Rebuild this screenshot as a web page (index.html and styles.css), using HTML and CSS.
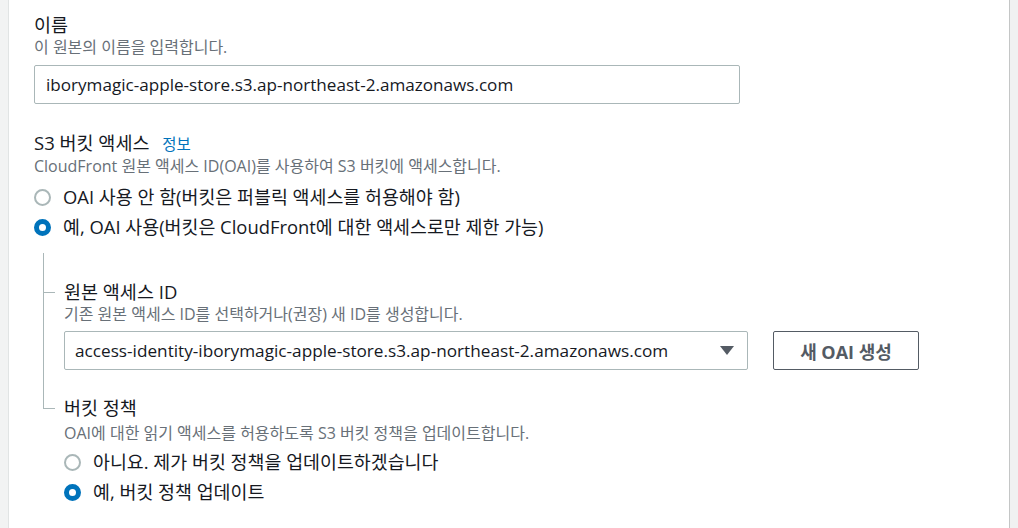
FILE: index.html
```html
<!DOCTYPE html>
<html lang="ko">
<head>
<meta charset="utf-8">
<title>원본 설정</title>
<link rel="stylesheet" href="styles.css">
</head>
<body>
<div class="page">
  <div class="gutter-left"></div>
  <main class="content">
    <section class="field field-name">
      <div class="label">이름</div>
      <div class="desc">이 원본의 이름을 입력합니다.</div>
      <div class="input">iborymagic-apple-store.s3.ap-northeast-2.amazonaws.com</div>
    </section>

    <section class="field field-access">
      <div class="label">S3 버킷 액세스 <a class="info" href="#">정보</a></div>
      <div class="desc">CloudFront 원본 액세스 ID(OAI)를 사용하여 S3 버킷에 액세스합니다.</div>
      <div class="radios">
        <div class="radio-row"><span class="radio"></span><span class="radio-text">OAI 사용 안 함(버킷은 퍼블릭 액세스를 허용해야 함)</span></div>
        <div class="radio-row"><span class="radio checked"></span><span class="radio-text">예, OAI 사용(버킷은 CloudFront에 대한 액세스로만 제한 가능)</span></div>
      </div>
    </section>

    <section class="tree">
      <div class="tree-item">
        <div class="label branch">원본 액세스 ID</div>
        <div class="desc">기존 원본 액세스 ID를 선택하거나(권장) 새 ID를 생성합니다.</div>
        <div class="select-row">
          <div class="select">
            <span class="select-text">access-identity-iborymagic-apple-store.s3.ap-northeast-2.amazonaws.com</span>
            <svg class="caret" width="14" height="9" viewBox="0 0 14 9"><path d="M0 0 H14 L7 9 Z" fill="#545b64"/></svg>
          </div>
          <button class="btn" type="button">새 OAI 생성</button>
        </div>
      </div>
      <div class="tree-item last">
        <div class="label branch">버킷 정책</div>
      </div>
    </section>

    <section class="policy">
      <div class="desc">OAI에 대한 읽기 액세스를 허용하도록 S3 버킷 정책을 업데이트합니다.</div>
      <div class="radios">
        <div class="radio-row"><span class="radio"></span><span class="radio-text">아니요. 제가 버킷 정책을 업데이트하겠습니다</span></div>
        <div class="radio-row"><span class="radio checked"></span><span class="radio-text">예, 버킷 정책 업데이트</span></div>
      </div>
    </section>
  </main>
  <div class="gutter-right"></div>
</div>
</body>
</html>
```

FILE: styles.css
```css
* { box-sizing: border-box; }
html, body { margin: 0; padding: 0; }
body {
  font-family: "Open Sans", "Noto Sans CJK KR", sans-serif;
  color: #16191f;
  background: #ffffff;
}
.page {
  display: flex;
  width: 1018px;
  height: 528px;
  overflow: hidden;
}
.gutter-left {
  width: 9px;
  flex: none;
  background: #f2f3f3;
  border-right: 1px solid #e1e4e4;
}
.gutter-right {
  width: 9px;
  flex: none;
  background: #f0f1f1;
  border-left: 1px solid #c4c6c6;
}
.content {
  flex: 1;
  background: #ffffff;
  padding: 13px 0 0 25px;
  display: flex;
  flex-direction: column;
}
.label {
  font-size: 18.5px;
  line-height: 24px;
  color: #16191f;
}
.desc {
  font-size: 16px;
  line-height: 20px;
  color: #687078;
}
.info {
  color: #0073bb;
  text-decoration: none;
  font-size: 15.5px;
  margin-left: 8px;
}
.input {
  margin-top: 8px;
  width: 706px;
  height: 39px;
  border: 1px solid #aab7b8;
  border-radius: 2px;
  padding: 0 11px;
  display: flex;
  align-items: center;
  font-size: 17.1px;
  color: #16191f;
}
.field-access { margin-top: 27px; }
.radios {
  margin-top: 6px;
  display: flex;
  flex-direction: column;
}
.radio-row {
  height: 30px;
  display: flex;
  align-items: center;
  gap: 12px;
}
.radio {
  width: 17px;
  height: 17px;
  flex: none;
  border-radius: 50%;
  border: 2px solid #aab7b8;
  background: #fff;
}
.radio.checked {
  border: 5.5px solid #0073bb;
}
.radio-text {
  font-size: 18.4px;
  line-height: 24px;
  color: #16191f;
}
.tree {
  position: relative;
  margin-top: 11px;
  margin-left: 9px;
  padding-left: 21px;
  padding-top: 27px;
}
.tree::before {
  content: "";
  position: absolute;
  left: 0;
  top: 0;
  bottom: 12px;
  width: 1px;
  background: #aab7b8;
}
.branch { position: relative; }
.branch::before {
  content: "";
  position: absolute;
  left: -21px;
  top: 12px;
  width: 12px;
  height: 1px;
  background: #aab7b8;
}
.select-row {
  margin-top: 7px;
  display: flex;
  gap: 25px;
  align-items: center;
}
.select {
  width: 684px;
  height: 39px;
  border: 1px solid #aab7b8;
  border-radius: 2px;
  padding: 0 13px 0 10px;
  display: flex;
  align-items: center;
  justify-content: space-between;
  font-size: 17.2px;
  color: #16191f;
}
.caret { display: block; }
.btn {
  width: 146px;
  height: 39px;
  border: 1px solid #545b64;
  border-radius: 2px;
  background: #fff;
  color: #545b64;
  font-family: "Open Sans", "Noto Sans CJK KR", sans-serif;
  font-weight: 700;
  font-size: 18px;
  padding: 0;
}
.tree-item.last { margin-top: 26px; }
.policy {
  padding-left: 30px;
  margin-top: 3px;
}
.policy .radios { margin-top: 4px; }
```
